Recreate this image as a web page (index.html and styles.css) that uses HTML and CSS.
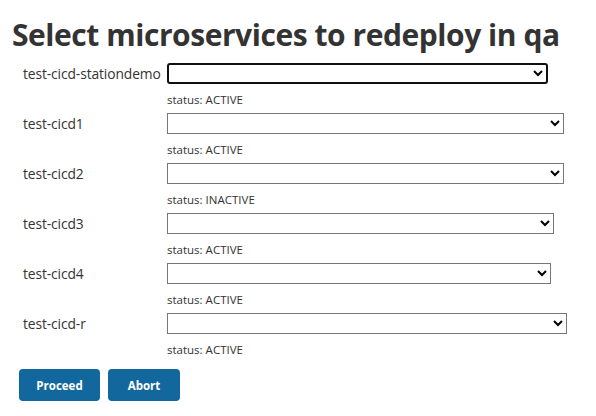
FILE: index.html
```html
<!DOCTYPE html>
<html>
<head>
<meta charset="utf-8">
<link rel="stylesheet" href="styles.css">
</head>
<body>
<div class="page">
  <h1 class="title">Select microservices to redeploy in qa</h1>
  <form class="form">
    <div class="field">
      <label class="label">test-cicd-stationdemo</label>
      <select class="select is-focused" style="width:381px"><option></option></select>
      <div class="status">status: ACTIVE</div>
    </div>
    <div class="field">
      <label class="label">test-cicd1</label>
      <select class="select" style="width:397px"><option></option></select>
      <div class="status">status: ACTIVE</div>
    </div>
    <div class="field">
      <label class="label">test-cicd2</label>
      <select class="select" style="width:397px"><option></option></select>
      <div class="status">status: INACTIVE</div>
    </div>
    <div class="field">
      <label class="label">test-cicd3</label>
      <select class="select" style="width:387px"><option></option></select>
      <div class="status">status: ACTIVE</div>
    </div>
    <div class="field">
      <label class="label">test-cicd4</label>
      <select class="select" style="width:384px"><option></option></select>
      <div class="status">status: ACTIVE</div>
    </div>
    <div class="field">
      <label class="label">test-cicd-r</label>
      <select class="select" style="width:400px"><option></option></select>
      <div class="status">status: ACTIVE</div>
    </div>
    <div class="actions">
      <button type="button" class="btn btn-proceed">Proceed</button>
      <button type="button" class="btn btn-abort">Abort</button>
    </div>
  </form>
</div>
</body>
</html>
```
FILE: styles.css
```css
html, body {
  margin: 0;
  padding: 0;
  background: #ffffff;
}
body {
  font-family: "Open Sans", "Noto Sans", sans-serif;
  color: #333333;
}
.page {
  padding: 15px 0 0 12px;
}
.title {
  margin: 0;
  font-size: 30px;
  line-height: 40px;
  font-weight: 700;
  color: #333333;
  letter-spacing: -0.45px;
}
.form {
  margin-top: 8px;
  padding-left: 11px;
}
.field {
  display: grid;
  grid-template-columns: 144px auto;
  align-items: center;
}
.label {
  font-size: 13.8px;
  line-height: 21px;
  color: #333333;
  letter-spacing: -0.1px;
}
.select {
  box-sizing: border-box;
  height: 21px;
  margin: 0;
  border: 1px solid #767676;
  border-radius: 0;
  background: #ffffff;
  font-size: 13px;
  justify-self: start;
}
.select.is-focused {
  border: 2px solid #101010;
  border-radius: 3px;
  outline: none;
}
.status {
  grid-column: 2;
  font-size: 11.5px;
  line-height: 15px;
  margin: 8px 0 6px;
  color: #333333;
}
.actions {
  display: flex;
  gap: 8px;
  margin-left: -4px;
  margin-top: 6px;
}
.btn {
  height: 32px;
  border: none;
  border-radius: 4px;
  background: #12689c;
  color: #ffffff;
  font-family: "Open Sans", "Noto Sans", sans-serif;
  font-weight: 700;
  font-size: 11.5px;
  padding: 0;
}
.btn-proceed { width: 81px; }
.btn-abort { width: 72px; }
```
